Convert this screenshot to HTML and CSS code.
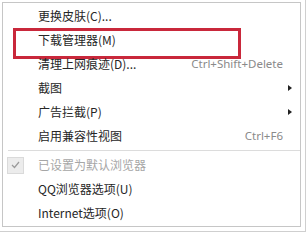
FILE: index.html
```html
<!DOCTYPE html>
<html lang="zh-CN">
<head>
    <meta charset="UTF-8">
    <title>工具菜单</title>
    <link rel="stylesheet" href="styles.css">
</head>
<body>
    <div class="shadow">
        <ul class="menu">
            <li class="item"><span class="slot"></span><span class="label">更换皮肤(C)...</span></li>
            <li class="item marked"><span class="slot"></span><span class="label">下载管理器(M)</span></li>
            <li class="item"><span class="slot"></span><span class="label">清理上网痕迹(D)...</span><span class="key">Ctrl+Shift+Delete</span></li>
            <li class="item"><span class="slot"></span><span class="label">截图</span><span class="arrow"></span></li>
            <li class="item"><span class="slot"></span><span class="label">广告拦截(P)</span><span class="arrow"></span></li>
            <li class="item"><span class="slot"></span><span class="label">启用兼容性视图</span><span class="key">Ctrl+F6</span></li>
            <li class="sep"></li>
            <li class="item disabled">
                <span class="slot">
                    <span class="check">
                        <svg width="9" height="8" viewBox="0 0 9 8"><path d="M1 4 L3.5 6.5 L8 1" fill="none" stroke="#9a9a9a" stroke-width="1.2"/></svg>
                    </span>
                </span>
                <span class="label">已设置为默认浏览器</span>
            </li>
            <li class="item"><span class="slot"></span><span class="label">QQ浏览器选项(U)</span></li>
            <li class="item"><span class="slot"></span><span class="label">Internet选项(O)</span></li>
        </ul>
    </div>
</body>
</html>
```

FILE: styles.css
```css
* {
    margin: 0;
    padding: 0;
    box-sizing: border-box;
}

body {
    width: 308px;
    height: 233px;
    background: #fff;
    font-family: "Noto Sans CJK SC", "Noto Sans", sans-serif;
    font-size: 12px;
    color: #262626;
    overflow: hidden;
}

.shadow {
    width: 306px;
    height: 232px;
    padding: 2px 0 0 2px;
    border-right: 1px solid #cfcfcf;
    border-bottom: 1px solid #cfcfcf;
}

.menu {
    list-style: none;
    width: 299px;
    height: 225px;
    padding: 1px 0;
    border: 1px solid #c6c6c6;
    background: #fff;
}

.item {
    position: relative;
    display: flex;
    align-items: center;
    height: 24px;
    padding: 0 17px 0 4px;
    line-height: 24px;
    white-space: nowrap;
}

.slot {
    display: flex;
    align-items: center;
    width: 31px;
    height: 24px;
}

.label {
    flex: 1;
}

.key {
    color: #8a8a8a;
    font-family: "Noto Sans", sans-serif;
    font-size: 11.5px;
}

.arrow {
    width: 0;
    height: 0;
    margin-right: -9px;
    border-top: 3.5px solid transparent;
    border-bottom: 3.5px solid transparent;
    border-left: 4px solid #222;
}

.marked::after {
    content: "";
    position: absolute;
    left: 10px;
    top: 0;
    width: 222px;
    height: 25px;
    border: 3px solid #c9283b;
}

.sep {
    height: 1px;
    margin: 2px 0 2px 5px;
    background: #dcdcdc;
}

.disabled {
    color: #a6a6a6;
}

.check {
    display: flex;
    align-items: center;
    justify-content: center;
    width: 17px;
    height: 17px;
    background: #ececec;
    border: 1px solid #dadada;
}
```
